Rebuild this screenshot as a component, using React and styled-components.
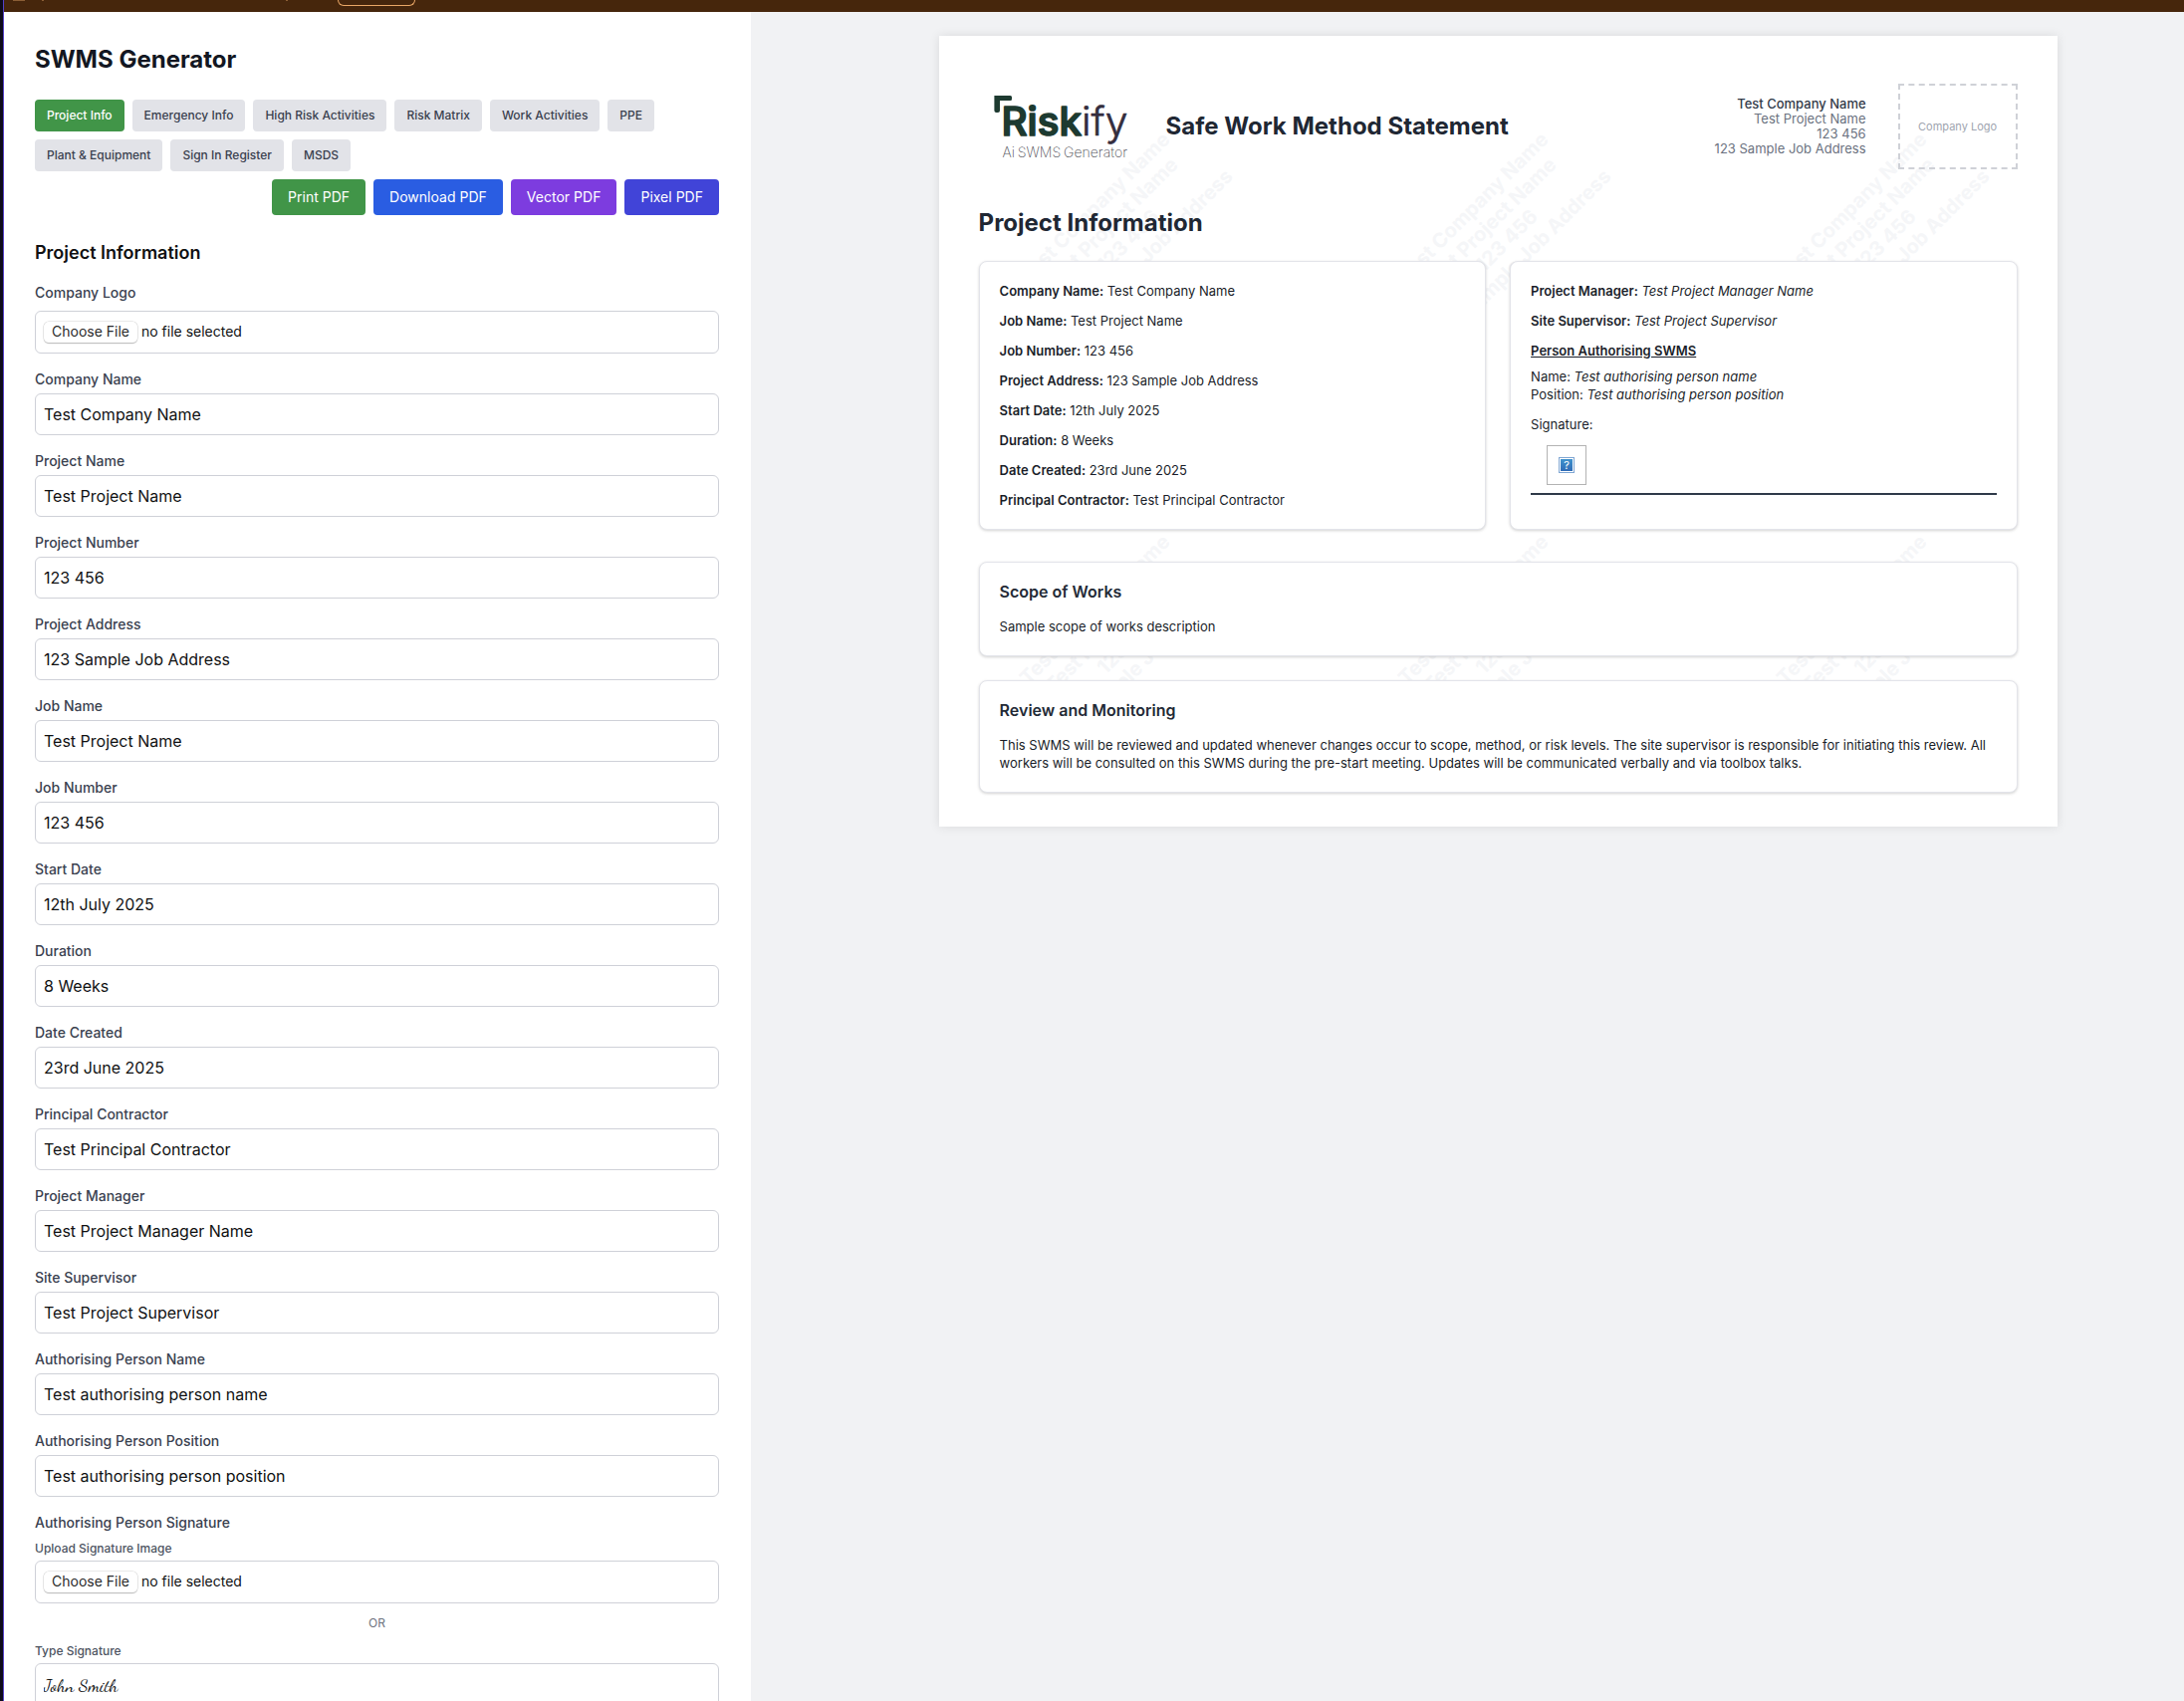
import React from 'react';
import styled, { createGlobalStyle } from 'styled-components';

const GlobalStyle = createGlobalStyle`
  *, *::before, *::after { box-sizing: border-box; }
  body {
    margin: 0;
    font-family: Inter, "Liberation Sans", sans-serif;
    background: #f1f2f4;
    color: #101112;
    overflow: hidden;
  }
  h1, h2, h3, p { margin: 0; }
`;

const Shell = styled.div`
  display: flex;
  height: 1708px;
  overflow: hidden;
`;

const Rail = styled.div`
  flex: none;
  width: 4px;
  background: #0d0b1b;
  border-right: 1px solid #5442c8;
`;

const Workspace = styled.div`
  flex: 1;
  min-width: 0;
  display: flex;
  flex-direction: column;
`;

const TopBar = styled.header`
  flex: none;
  height: 12px;
  display: flex;
  align-items: flex-start;
  background: #46260c;
`;

const Tick = styled.span`
  width: ${(p) => p.$w}px;
  height: 1px;
  margin-left: ${(p) => p.$gap}px;
  background: #8b5e35;
`;

const BarButton = styled.span`
  width: 78px;
  height: 6px;
  margin-left: 50px;
  border: 1px solid #e9a766;
  border-top: 0;
  border-radius: 0 0 6px 6px;
`;

const Columns = styled.div`
  flex: 1;
  min-height: 0;
  display: flex;
`;

const FormPanel = styled.aside`
  flex: none;
  width: 750px;
  padding: 32px 32px 0 31px;
  background: #fff;
  overflow: hidden;
`;

const Title = styled.h1`
  font-size: 24px;
  line-height: 32px;
  font-weight: 700;
  color: #131722;
`;

const Tabs = styled.nav`
  display: flex;
  flex-wrap: wrap;
  gap: 8px;
  margin-top: 24px;
`;

const Tab = styled.button`
  height: 32px;
  padding: 8px 12px;
  border: 0;
  border-radius: 4px;
  font: 500 12px/16px Inter, sans-serif;
  color: ${(p) => (p.$active ? '#fff' : '#3a414f')};
  background: ${(p) => (p.$active ? '#419548' : '#e2e3e8')};
`;

const Actions = styled.div`
  display: flex;
  justify-content: flex-end;
  gap: 8px;
  margin: 8px 0 24px;
`;

const Action = styled.button`
  height: 36px;
  padding: 8px 16px;
  border: 0;
  border-radius: 4px;
  font: 400 14px/20px Inter, sans-serif;
  letter-spacing: 0.012px;
  color: #fff;
  background: ${(p) => p.$color};
`;

const SectionTitle = styled.h2`
  font-size: 18px;
  line-height: 28px;
  font-weight: 600;
  margin-bottom: 16px;
`;

const Field = styled.div`
  margin-bottom: 16px;
`;

const Label = styled.label`
  display: block;
  font-size: 14px;
  line-height: 20px;
  font-weight: 500;
  color: #3a414f;
  margin-bottom: ${(p) => p.$space ?? 4}px;
`;

const SmallLabel = styled.label`
  display: block;
  font-size: 12px;
  line-height: 16px;
  font-weight: 500;
  color: #4d5461;
  margin-bottom: 4px;
`;

const TextInput = styled.input`
  display: block;
  width: 100%;
  height: 42px;
  padding: 8px;
  border: 1px solid #cfd1d8;
  border-radius: 6px;
  font: 400 16px/24px Inter, sans-serif;
  color: #101112;
  background: #fff;
`;

const SignatureInput = styled(TextInput)`
  height: 44px;
  font: 400 18px/26px "Dancing Script", "Liberation Serif", cursive;
`;

const FileBox = styled.div`
  display: flex;
  align-items: center;
  gap: 4px;
  width: 100%;
  height: 43px;
  padding: 0 8px 1px;
  border: 1px solid #cfd1d8;
  border-radius: 6px;
  font-size: 14px;
  line-height: 20px;
`;

const FileButton = styled.button`
  height: 21px;
  width: 94px;
  padding: 0;
  border: 0;
  border-radius: 5px;
  background: #fff;
  box-shadow: 0 0 0 0.5px #d4d4d4, 0 1px 1px rgba(0, 0, 0, 0.35);
  font: 400 14px/20px Inter, sans-serif;
  color: #2b2b2b;
`;

const Or = styled.div`
  margin: 12px 0;
  text-align: center;
  font-size: 12px;
  line-height: 16px;
  color: #6d727e;
`;

const Preview = styled.main`
  flex: 1;
  min-width: 0;
  padding: 24px 0 0 188.6px;
  background: #f1f2f4;
`;

const Page = styled.article`
  position: relative;
  isolation: isolate;
  width: 1123px;
  height: 794px;
  padding: 48px 40px 0;
  background: #fff;
  box-shadow: 0 0 10px rgba(0, 0, 0, 0.1);
`;

const Watermark = styled.svg`
  position: absolute;
  inset: 0;
  z-index: -1;
  font: 700 20px Inter, sans-serif;
  fill: #f5f6f8;
`;

const PageHeader = styled.header`
  display: flex;
  align-items: center;
  height: 86px;
`;

const LogoMark = styled.svg`
  flex: none;
  width: 180px;
  height: 86px;
`;

const DocTitle = styled.h1`
  margin-left: 8px;
  font-size: 24px;
  line-height: 32px;
  font-weight: 700;
  color: #202733;
`;

const Meta = styled.div`
  margin-left: auto;
  text-align: right;
  font-size: 13px;
  line-height: 15px;
  color: #6b7280;
`;

const MetaName = styled.div`
  font-weight: 500;
  color: #333b49;
`;

const LogoSlot = styled.div`
  display: flex;
  align-items: center;
  justify-content: center;
  width: 120px;
  height: 86px;
  margin-left: 32px;
  border: 2px dashed #cfd1d7;
  font-size: 11px;
  color: #a0a5b0;
`;

const DocHeading = styled.h2`
  margin: 38px 0 22px;
  font-size: 24px;
  line-height: 32px;
  font-weight: 700;
  color: #202733;
`;

const CardGrid = styled.div`
  display: grid;
  grid-template-columns: 1fr 1fr;
  gap: 24px;
  margin-bottom: 32px;
`;

const Card = styled.section`
  padding: 20px;
  margin-bottom: ${(p) => p.$below ?? 0}px;
  border: 1px solid #e3e4ea;
  border-radius: 8px;
  background: #fff;
  box-shadow: 0 1px 3px rgba(0, 0, 0, 0.18);
  font-size: 13px;
  line-height: 18px;
  color: #1a1e29;
`;

const CardTitle = styled.h3`
  margin-bottom: 16px;
  font-size: 16px;
  line-height: 19px;
  font-weight: 600;
  color: #232a36;
`;

const Line = styled.p`
  margin-bottom: ${(p) => p.$below ?? 12}px;
  &:last-child { margin-bottom: 0; }
  b, u { font-weight: 600; }
`;

const SignatureLine = styled.div`
  height: 50px;
  padding-left: 16px;
  border-bottom: 2px solid #2f3a49;
`;

const MissingImage = styled.div`
  display: flex;
  align-items: center;
  justify-content: center;
  width: 40px;
  height: 40px;
  border: 1px solid #b3b3b3;
`;

const MissingGlyph = styled.span`
  display: flex;
  align-items: center;
  justify-content: center;
  width: 16px;
  height: 16px;
  border: 1px solid #7fa6d3;
  box-shadow: inset 0 0 0 1px #fff;
  background: linear-gradient(#4196cf, #2e68b4);
  font-size: 11px;
  line-height: 12px;
  color: #fff;
`;

const tabs = ['Project Info', 'Emergency Info', 'High Risk Activities', 'Risk Matrix', 'Work Activities', 'PPE', 'Plant & Equipment', 'Sign In Register', 'MSDS'];

const actions = [
  ['Print PDF', '#419548'],
  ['Download PDF', '#2a5de2'],
  ['Vector PDF', '#7d3cdf'],
  ['Pixel PDF', '#4144d8'],
];

const fields = [
  ['Company Name', 'Test Company Name'],
  ['Project Name', 'Test Project Name'],
  ['Project Number', '123 456'],
  ['Project Address', '123 Sample Job Address'],
  ['Job Name', 'Test Project Name'],
  ['Job Number', '123 456'],
  ['Start Date', '12th July 2025'],
  ['Duration', '8 Weeks'],
  ['Date Created', '23rd June 2025'],
  ['Principal Contractor', 'Test Principal Contractor'],
  ['Project Manager', 'Test Project Manager Name'],
  ['Site Supervisor', 'Test Project Supervisor'],
  ['Authorising Person Name', 'Test authorising person name'],
  ['Authorising Person Position', 'Test authorising person position'],
];

const details = [
  ['Company Name', 'Test Company Name'],
  ['Job Name', 'Test Project Name'],
  ['Job Number', '123 456'],
  ['Project Address', '123 Sample Job Address'],
  ['Start Date', '12th July 2025'],
  ['Duration', '8 Weeks'],
  ['Date Created', '23rd June 2025'],
  ['Principal Contractor', 'Test Principal Contractor'],
];

const stamp = ['Test Company Name', 'Test Project Name', '123 456', '123 Sample Job Address'];

function FilePicker() {
  return (
    <FileBox>
      <FileButton>Choose File</FileButton>
      <span>no file selected</span>
    </FileBox>
  );
}

function PageWatermark() {
  const tiles = [0, 1].flatMap((row) => [0, 1, 2].map((col) => [col * 380, row * 404]));
  return (
    <Watermark width="1123" height="794" aria-hidden="true">
      {tiles.map(([x, y]) => (
        <g key={`${x}-${y}`} transform={`translate(${161.2 + x} ${177 + y}) rotate(-45)`} textAnchor="middle">
          {stamp.map((text, i) => (
            <text key={text} y={i * 23.6}>{text}</text>
          ))}
        </g>
      ))}
    </Watermark>
  );
}

function Logo() {
  return (
    <LogoMark viewBox="0 0 180 86" role="img" aria-label="Riskify">
      <path d="M15.4 12H31.5Q33 12 33 13.5V15.5Q33 17 31.5 17H21V27Q21 29 19 29H17.4Q15.4 29 15.4 27Z" fill="#1d3a30" />
      <text x="22.5" y="52.3" textLength="80.5" lengthAdjust="spacingAndGlyphs" fill="#1d3a30" stroke="#1d3a30" strokeWidth="1.7" strokeLinejoin="round" fontFamily="Inter, sans-serif" fontWeight="500" fontSize="39.5">Risk</text>
      <text x="103" y="52.3" textLength="46.5" lengthAdjust="spacingAndGlyphs" fill="#332d3d" stroke="#332d3d" strokeWidth="0.6" strokeLinejoin="round" fontFamily="Inter, sans-serif" fontWeight="300" fontSize="40">ify</text>
      <text x="23.5" y="73.5" textLength="125.5" lengthAdjust="spacingAndGlyphs" wordSpacing="-1.2" fill="#4c4c54" fontFamily="Inter, sans-serif" fontWeight="200" fontSize="14.5">Ai SWMS Generator</text>
    </LogoMark>
  );
}

export default function App() {
  return (
    <>
      <GlobalStyle />
      <Shell>
        <Rail />
        <Workspace>
          <TopBar>
            <Tick $w={12} $gap={9} />
            <Tick $w={2} $gap={17} />
            <Tick $w={2} $gap={243} />
            <BarButton />
          </TopBar>
          <Columns>
            <FormPanel>
              <Title>SWMS Generator</Title>
              <Tabs>
                {tabs.map((t, i) => <Tab key={t} $active={i === 0}>{t}</Tab>)}
              </Tabs>
              <Actions>
                {actions.map(([text, color]) => <Action key={text} $color={color}>{text}</Action>)}
              </Actions>
              <SectionTitle>Project Information</SectionTitle>
              <Field>
                <Label $space={8}>Company Logo</Label>
                <FilePicker />
              </Field>
              {fields.map(([label, value]) => (
                <Field key={label}>
                  <Label>{label}</Label>
                  <TextInput defaultValue={value} />
                </Field>
              ))}
              <Label $space={8}>Authorising Person Signature</Label>
              <SmallLabel>Upload Signature Image</SmallLabel>
              <FilePicker />
              <Or>OR</Or>
              <SmallLabel>Type Signature</SmallLabel>
              <SignatureInput defaultValue="John Smith" />
            </FormPanel>
            <Preview>
              <Page>
                <PageWatermark />
                <PageHeader>
                  <Logo />
                  <DocTitle>Safe Work Method Statement</DocTitle>
                  <Meta>
                    <MetaName>Test Company Name</MetaName>
                    <div>Test Project Name</div>
                    <div>123 456</div>
                    <div>123 Sample Job Address</div>
                  </Meta>
                  <LogoSlot>Company Logo</LogoSlot>
                </PageHeader>
                <DocHeading>Project Information</DocHeading>
                <CardGrid>
                  <Card>
                    {details.map(([name, value]) => (
                      <Line key={name}><b>{name}:</b> {value}</Line>
                    ))}
                  </Card>
                  <Card>
                    <Line><b>Project Manager:</b> <i>Test Project Manager Name</i></Line>
                    <Line><b>Site Supervisor:</b> <i>Test Project Supervisor</i></Line>
                    <Line $below={8}><u>Person Authorising SWMS</u></Line>
                    <Line>Name: <i>Test authorising person name</i><br />Position: <i>Test authorising person position</i></Line>
                    <Line>Signature:</Line>
                    <SignatureLine>
                      <MissingImage><MissingGlyph>?</MissingGlyph></MissingImage>
                    </SignatureLine>
                  </Card>
                </CardGrid>
                <Card $below={24}>
                  <CardTitle>Scope of Works</CardTitle>
                  <Line>Sample scope of works description</Line>
                </Card>
                <Card>
                  <CardTitle>Review and Monitoring</CardTitle>
                  <Line>
                    This SWMS will be reviewed and updated whenever changes occur to scope, method, or risk levels. The site supervisor is responsible for initiating this review. All workers will be consulted on this SWMS during the pre-start meeting. Updates will be communicated verbally and via toolbox talks.
                  </Line>
                </Card>
              </Page>
            </Preview>
          </Columns>
        </Workspace>
      </Shell>
    </>
  );
}
